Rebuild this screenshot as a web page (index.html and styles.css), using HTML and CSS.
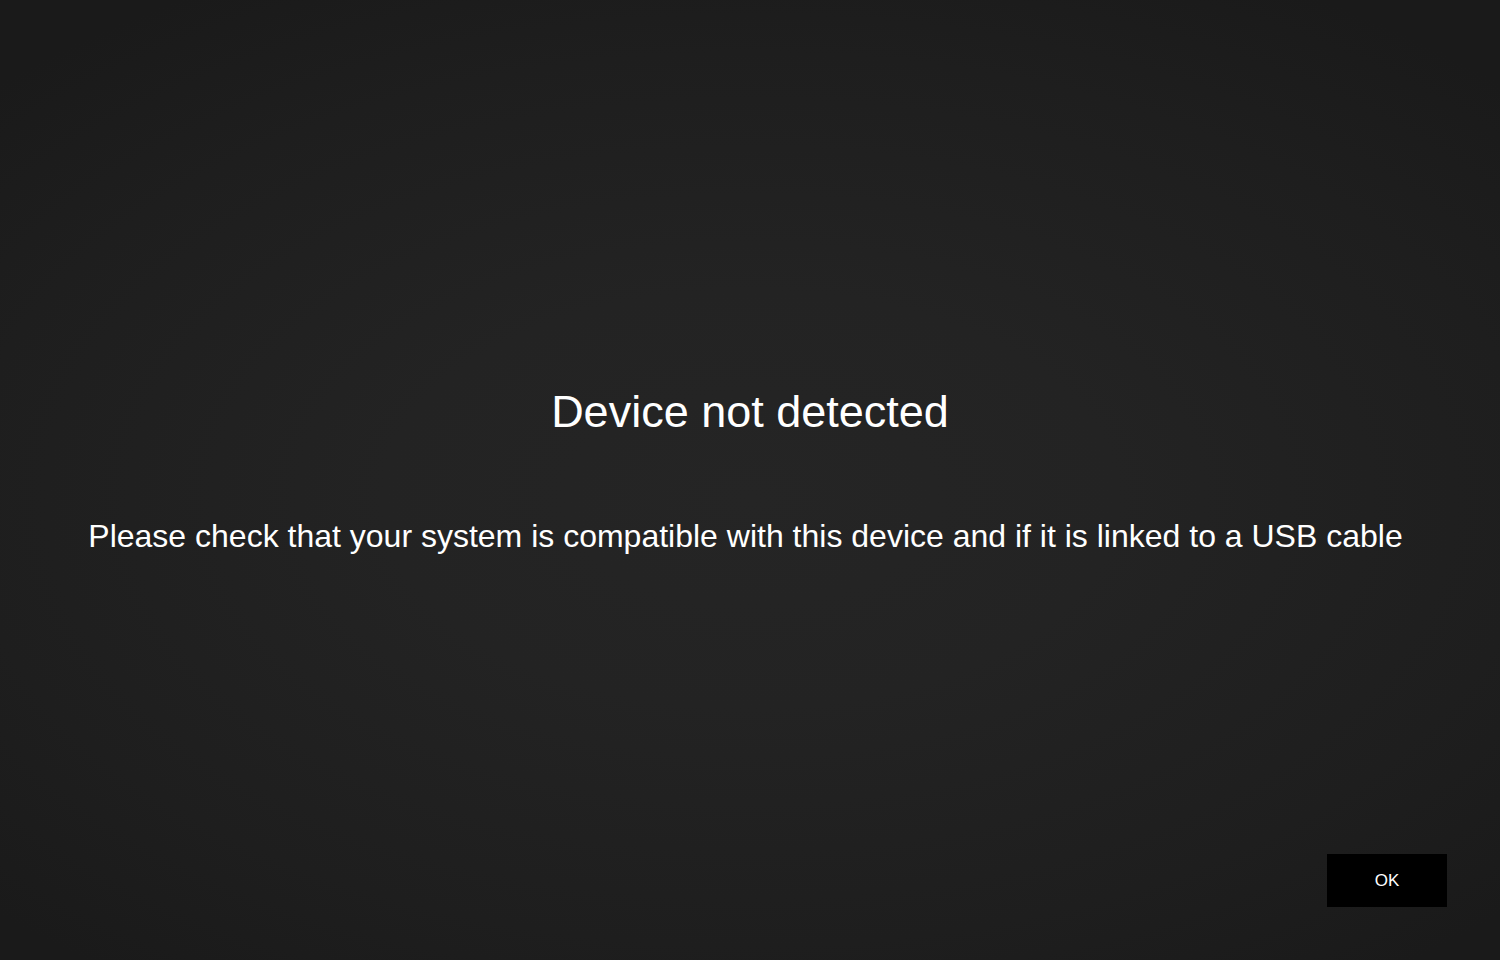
FILE: index.html
```html
<!DOCTYPE html>
<html lang="en">
  <head>
    <meta charset="UTF-8">
    <meta name="viewport" content="width=device-width, initial-scale=1.0">
    <title>Device not detected</title>
    <link rel="stylesheet" href="styles.css">
  </head>
  <body>
    <div class="screen">
      <div class="message">
        <h1 class="message-title">Device not detected</h1>
        <p class="message-text">Please check that your system is compatible with this device and if it is linked to a USB cable</p>
      </div>
      <div class="actions">
        <button class="ok-btn" type="button">OK</button>
      </div>
    </div>
  </body>
</html>
```

FILE: styles.css
```css
* {
  box-sizing: border-box;
}

html,
body {
  margin: 0;
  height: 100%;
}

body {
  font-family: "Liberation Sans", Arial, sans-serif;
  color: #ffffff;
  background-color: #1b1b1b;
}

.screen {
  height: 960px;
  display: flex;
  flex-direction: column;
  background: radial-gradient(ellipse 70% 62% at 50% 52%, #252525 0%, #232323 35%, #1e1e1e 75%, #1a1a1a 100%);
}

.message {
  flex: 1;
  display: flex;
  flex-direction: column;
  align-items: center;
  padding-top: 386px;
}

.message-title {
  margin: 0;
  font-size: 45px;
  font-weight: normal;
  line-height: 52px;
}

.message-text {
  margin: 79px 0 0;
  padding-right: 9px;
  font-size: 32px;
  line-height: 38px;
}

.actions {
  display: flex;
  justify-content: flex-end;
  padding: 0 53px 53px;
}

.ok-btn {
  width: 120px;
  height: 53px;
  border: none;
  background-color: #000000;
  color: #ffffff;
  font-family: "Liberation Sans", Arial, sans-serif;
  font-size: 17px;
  cursor: pointer;
}
```
